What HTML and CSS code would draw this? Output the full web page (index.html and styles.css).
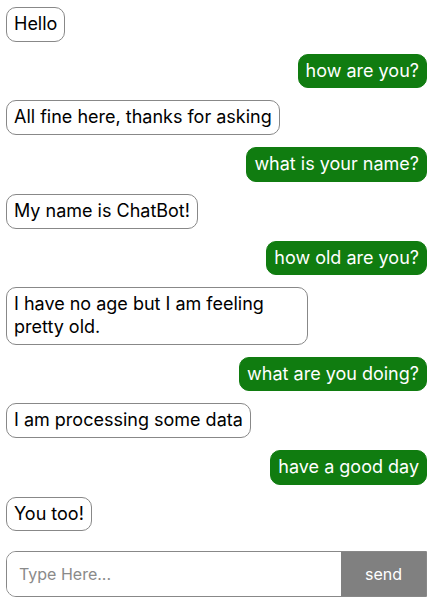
FILE: index.html
```html
<!DOCTYPE html>
<html lang="en">
<head>
<meta charset="utf-8">
<title>ChatBot</title>
<link rel="stylesheet" href="styles.css">
</head>
<body>
<div class="chat">
  <div class="messages">
    <div class="msg bot">Hello</div>
    <div class="msg user">how are you?</div>
    <div class="msg bot">All fine here, thanks for asking</div>
    <div class="msg user">what is your name?</div>
    <div class="msg bot">My name is ChatBot!</div>
    <div class="msg user">how old are you?</div>
    <div class="msg bot">I have no age but I am feeling pretty old.</div>
    <div class="msg user">what are you doing?</div>
    <div class="msg bot">I am processing some data</div>
    <div class="msg user">have a good day</div>
    <div class="msg bot">You too!</div>
  </div>
  <form class="composer">
    <input class="composer-input" type="text" placeholder="Type Here...">
    <button class="composer-send" type="button">send</button>
  </form>
</div>
</body>
</html>
```
FILE: styles.css
```css
html, body {
  margin: 0;
  padding: 0;
  background: #ffffff;
}
body {
  font-family: Inter, "Noto Sans", sans-serif;
  color: #000;
}
.chat {
  padding: 7px 5px 0 6px;
  display: flex;
  flex-direction: column;
}
.messages {
  display: flex;
  flex-direction: column;
  gap: 12px;
}
.msg {
  font-size: 18px;
  line-height: 22.7px;
  padding: 5px 7px;
  border-radius: 10px;
  max-width: 302px;
  box-sizing: border-box;
}
.bot {
  align-self: flex-start;
  border: 1px solid #888;
  background: #fff;
}
.user {
  align-self: flex-end;
  border: 1px solid #107c10;
  background: #107c10;
  color: #fff;
}
.composer {
  margin: 20px 0 0 0;
  display: flex;
  height: 46px;
  border: 1px solid #888;
  border-radius: 10px 0 0 10px;
  overflow: hidden;
  box-sizing: border-box;
}
.composer-input {
  flex: 1;
  border: none;
  outline: none;
  padding: 0 12px;
  font-family: Inter, "Noto Sans", sans-serif;
  font-size: 16px;
  color: #000;
  background: #fff;
}
.composer-input::placeholder {
  color: #8a8a8a;
}
.composer-send {
  width: 85px;
  border: none;
  background: #808080;
  color: #fff;
  font-family: Inter, "Noto Sans", sans-serif;
  font-size: 16px;
  padding: 0;
}
```
